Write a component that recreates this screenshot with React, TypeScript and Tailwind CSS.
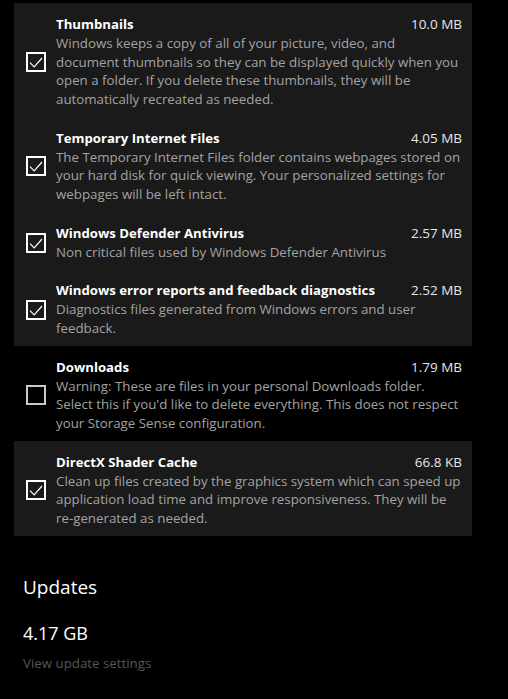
import React from "react";

type Item = { title: string; size: string; checked: boolean; lines: string[] };

const items: Item[] = [
  {
    title: "Thumbnails",
    size: "10.0 MB",
    checked: true,
    lines: [
      "Windows keeps a copy of all of your picture, video, and",
      "document thumbnails so they can be displayed quickly when you",
      "open a folder. If you delete these thumbnails, they will be",
      "automatically recreated as needed.",
    ],
  },
  {
    title: "Temporary Internet Files",
    size: "4.05 MB",
    checked: true,
    lines: [
      "The Temporary Internet Files folder contains webpages stored on",
      "your hard disk for quick viewing. Your personalized settings for",
      "webpages will be left intact.",
    ],
  },
  {
    title: "Windows Defender Antivirus",
    size: "2.57 MB",
    checked: true,
    lines: ["Non critical files used by Windows Defender Antivirus"],
  },
  {
    title: "Windows error reports and feedback diagnostics",
    size: "2.52 MB",
    checked: true,
    lines: ["Diagnostics files generated from Windows errors and user", "feedback."],
  },
  {
    title: "Downloads",
    size: "1.79 MB",
    checked: false,
    lines: [
      "Warning: These are files in your personal Downloads folder.",
      "Select this if you'd like to delete everything. This does not respect",
      "your Storage Sense configuration.",
    ],
  },
  {
    title: "DirectX Shader Cache",
    size: "66.8 KB",
    checked: true,
    lines: [
      "Clean up files created by the graphics system which can speed up",
      "application load time and improve responsiveness. They will be",
      "re-generated as needed.",
    ],
  },
];

function Checkbox({ checked }: { checked: boolean }) {
  return (
    <div
      className={
        checked
          ? "w-[20px] h-[20px] shrink-0 border-2 border-white"
          : "w-[20px] h-[20px] shrink-0 border-2 border-[#c8c8c8]"
      }
    >
      {checked && (
        <svg width="16" height="16" viewBox="0 0 16 16" className="block">
          <path d="M2 8.6 L6.2 12.8 L14 4" fill="none" stroke="#ffffff" strokeWidth="1.2" />
        </svg>
      )}
    </div>
  );
}

function Row({ item }: { item: Item }) {
  return (
    <div
      className={
        item.checked
          ? "flex items-center bg-[#1a1a1a] pl-[12px] pr-[10px] pt-[12px] pb-[8px]"
          : "flex items-center bg-black pl-[12px] pr-[10px] pt-[12px] pb-[8px]"
      }
    >
      <Checkbox checked={item.checked} />
      <div className="flex-1 ml-[10px] flex flex-col">
        <div className="flex justify-between items-baseline leading-[19px]">
          <span className="text-[13.2px] font-bold text-white whitespace-nowrap">{item.title}</span>
          <span className="text-[13.5px] text-[#e6e6e6] whitespace-nowrap">{item.size}</span>
        </div>
        <div className="text-[13.3px] leading-[18.67px] text-[#a3a3a3]">
          {item.lines.map((l, i) => (
            <div key={i} className="whitespace-nowrap">
              {l}
            </div>
          ))}
        </div>
      </div>
    </div>
  );
}

export default function App() {
  return (
    <div
      className="w-full min-h-screen bg-black overflow-hidden pt-[3px]"
      style={{ fontFamily: '"Open Sans", "Noto Sans", sans-serif' }}
    >
      <div className="ml-[14px] w-[458px] flex flex-col">
        {items.map((it) => (
          <Row key={it.title} item={it} />
        ))}
      </div>
      <div className="ml-[23px] mt-[37px] flex flex-col">
        <div className="text-[19px] leading-[28px] text-white">Updates</div>
        <div className="text-[18px] leading-[26px] text-white mt-[19px]">4.17 GB</div>
        <div className="text-[13.3px] leading-[20px] text-[#555555] mt-[7px]">View update settings</div>
      </div>
    </div>
  );
}
